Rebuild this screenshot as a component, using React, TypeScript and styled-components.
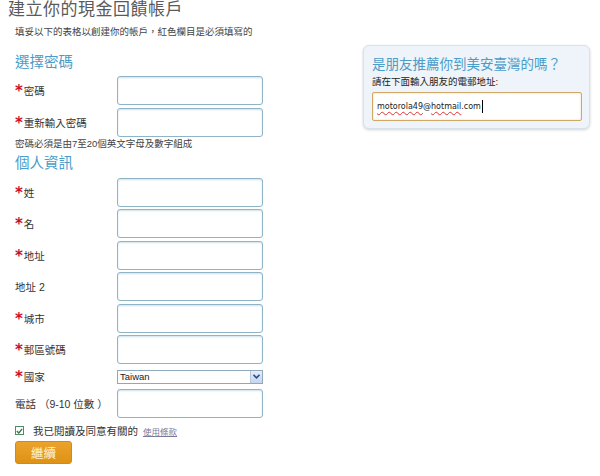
import React, { FC } from 'react';
import styled, { createGlobalStyle } from 'styled-components';

const CJK = `"Liberation Sans", "Noto Sans CJK TC", sans-serif`;

const GlobalStyle = createGlobalStyle`
  html, body {
    margin: 0;
    padding: 0;
    background: #ffffff;
    font-family: ${CJK};
    color: #333333;
  }
`;

type Field = { label: string; required?: boolean; kind?: 'text' | 'select' };

const passwordFields: Field[] = [
  { label: '密碼', required: true },
  { label: '重新輸入密碼', required: true },
];

const personalFields: Field[] = [
  { label: '姓', required: true },
  { label: '名', required: true },
  { label: '地址', required: true },
  { label: '地址 2' },
  { label: '城市', required: true },
  { label: '郵區號碼', required: true },
  { label: '國家', required: true, kind: 'select' },
  { label: '電話 （9-10 位數 ）' },
];

const FieldRow: FC<{ field: Field }> = ({ field }) => (
  <Row $select={field.kind === 'select'}>
    <Label>
      {field.required && <Star>*</Star>}
      {field.label}
    </Label>
    {field.kind === 'select' ? (
      <Select>
        <span>Taiwan</span>
        <SelectArrow>
          <svg width="7" height="5" viewBox="0 0 7 5">
            <path d="M0.5 0.8 L3.5 3.8 L6.5 0.8" fill="none" stroke="#2f4f8f" strokeWidth="1.6" />
          </svg>
        </SelectArrow>
      </Select>
    ) : (
      <Input />
    )}
  </Row>
);

const App: FC = () => {
  return (
    <>
      <GlobalStyle />
      <Page>
        <Title>建立你的現金回饋帳戶</Title>
        <Intro>填妥以下的表格以創建你的帳戶，紅色欄目是必須填寫的</Intro>
        <Body>
          <Form>
            <SectionTitle>選擇密碼</SectionTitle>
            <Rows>
              {passwordFields.map((f) => (
                <FieldRow key={f.label} field={f} />
              ))}
            </Rows>
            <Hint>密碼必須是由7至20個英文字母及數字組成</Hint>
            <SectionTitle $tight>個人資訊</SectionTitle>
            <Rows>
              {personalFields.map((f) => (
                <FieldRow key={f.label} field={f} />
              ))}
            </Rows>
            <Agree>
              <CheckBox>
                <svg width="7" height="6" viewBox="0 0 7 6">
                  <path d="M0.8 3 L2.8 5 L6.2 0.8" fill="none" stroke="#2f7d2f" strokeWidth="1.3" />
                </svg>
              </CheckBox>
              <span>我已閱讀及同意有關的</span>
              <Terms>使用條款</Terms>
            </Agree>
            <Continue>繼續</Continue>
          </Form>

          <Referral>
            <ReferralTitle>是朋友推薦你到美安臺灣的嗎？</ReferralTitle>
            <ReferralText>請在下面輸入朋友的電郵地址:</ReferralText>
            <EmailBox>
              <Spell>motorola49</Spell>@<Spell>hotmail</Spell>.com
              <Caret />
            </EmailBox>
          </Referral>
        </Body>
      </Page>
    </>
  );
};

const Page = styled.div`
  width: 600px;
  height: 476px;
  overflow: hidden;
  padding: 0 0 0 8px;
  box-sizing: border-box;
`;

const Title = styled.h1`
  margin: 0;
  font-size: 17px;
  line-height: 20px;
  font-weight: 400;
  color: #5a5a5a;
  letter-spacing: 0.5px;
`;

const Intro = styled.p`
  margin: 6px 0 0 7px;
  font-size: 9.5px;
  line-height: 12px;
  color: #444444;
`;

const Body = styled.div`
  display: flex;
  align-items: flex-start;
  margin-top: 9px;
`;

const Form = styled.div`
  width: 255px;
  padding-left: 7px;
  padding-top: 5px;
  flex-shrink: 0;
`;

const SectionTitle = styled.h2<{ $tight?: boolean }>`
  margin: ${(p) => (p.$tight ? '3px 0 5px' : '0 0 4px')};
  font-size: 14.5px;
  line-height: 20px;
  font-weight: 400;
  color: #4b9cc8;
`;

const Rows = styled.div`
  display: flex;
  flex-direction: column;
  gap: 2.5px;
`;

const Row = styled.div<{ $select?: boolean }>`
  display: flex;
  align-items: center;
  height: ${(p) => (p.$select ? '20px' : '29px')};
`;

const Label = styled.div`
  width: 102px;
  flex-shrink: 0;
  font-size: 10.5px;
  color: #333333;
  display: flex;
  align-items: center;
  white-space: nowrap;
`;

const Star = styled.span`
  color: #c8102e;
  font-size: 15px;
  font-weight: 700;
  line-height: 10px;
  height: 10px;
  margin-right: 1px;
  margin-top: 1px;
  font-family: "DejaVu Sans", sans-serif;
`;

const Input = styled.div`
  width: 146px;
  height: 29px;
  box-sizing: border-box;
  border: 1px solid #8fb4c8;
  border-radius: 3px;
  background: #ffffff;
  box-shadow: inset 0 1px 2px rgba(120, 170, 200, 0.35);
`;

const Select = styled.div`
  width: 146px;
  height: 14px;
  box-sizing: border-box;
  border: 1px solid #8ea9bd;
  background: #ffffff;
  display: flex;
  align-items: center;
  justify-content: space-between;
  font-family: "Liberation Sans", Arial, sans-serif;
  font-size: 9.5px;
  color: #222222;
  padding-left: 2px;
`;

const SelectArrow = styled.span`
  width: 11px;
  height: 12px;
  background: linear-gradient(#e4edf8, #c5d6ec);
  border-left: 1px solid #b5c8e0;
  display: flex;
  align-items: center;
  justify-content: center;
`;

const Hint = styled.p`
  margin: 1px 0 0;
  font-size: 9.5px;
  line-height: 12px;
  color: #444444;
`;

const Agree = styled.div`
  display: flex;
  align-items: center;
  gap: 5px;
  margin-top: 5px;
  font-size: 10.5px;
  color: #333333;
`;

const CheckBox = styled.span`
  width: 9px;
  height: 9px;
  box-sizing: border-box;
  border: 1px solid #4f8a6a;
  background: #ffffff;
  display: inline-flex;
  align-items: center;
  justify-content: center;
  margin-right: 4px;
`;

const Terms = styled.a`
  font-size: 8.5px;
  color: #7a7a9a;
  text-decoration: underline;
`;

const Continue = styled.button`
  display: block;
  margin-top: 3px;
  width: 57px;
  height: 23px;
  border: 1px solid #d38a12;
  border-radius: 3px;
  background: linear-gradient(#eba32c, #df9215);
  color: #fff4d6;
  font-family: ${CJK};
  font-size: 12.5px;
  padding: 0;
  cursor: pointer;
`;

const Referral = styled.div`
  margin: -2px 0 0 93px;
  width: 227px;
  height: 84px;
  box-sizing: border-box;
  padding: 10px 8px 0 8px;
  background: #eef4f9;
  border: 1px solid #d8e2ec;
  border-radius: 6px;
  box-shadow: 0 1px 3px rgba(0, 0, 0, 0.18);
`;

const ReferralTitle = styled.h3`
  margin: 0;
  font-size: 13.5px;
  line-height: 18px;
  font-weight: 400;
  color: #4b9cc8;
`;

const ReferralText = styled.p`
  margin: 2px 0 0;
  font-size: 9.5px;
  line-height: 12px;
  color: #222222;
`;

const EmailBox = styled.div`
  margin-top: 4px;
  width: 210px;
  height: 29px;
  box-sizing: border-box;
  border: 1px solid #d0a865;
  border-radius: 2px;
  background: #ffffff;
  box-shadow: inset 0 0 2px rgba(220, 170, 90, 0.5);
  display: flex;
  align-items: center;
  padding-left: 4px;
  font-family: "DejaVu Sans", sans-serif;
  font-size: 8px;
  color: #222222;
`;

const Spell = styled.span`
  text-decoration: underline wavy #e03030;
  text-decoration-thickness: 1px;
  text-underline-offset: 2px;
`;

const Caret = styled.span`
  display: inline-block;
  width: 1px;
  height: 13px;
  background: #000000;
  margin-left: 1px;
`;

export default App;
